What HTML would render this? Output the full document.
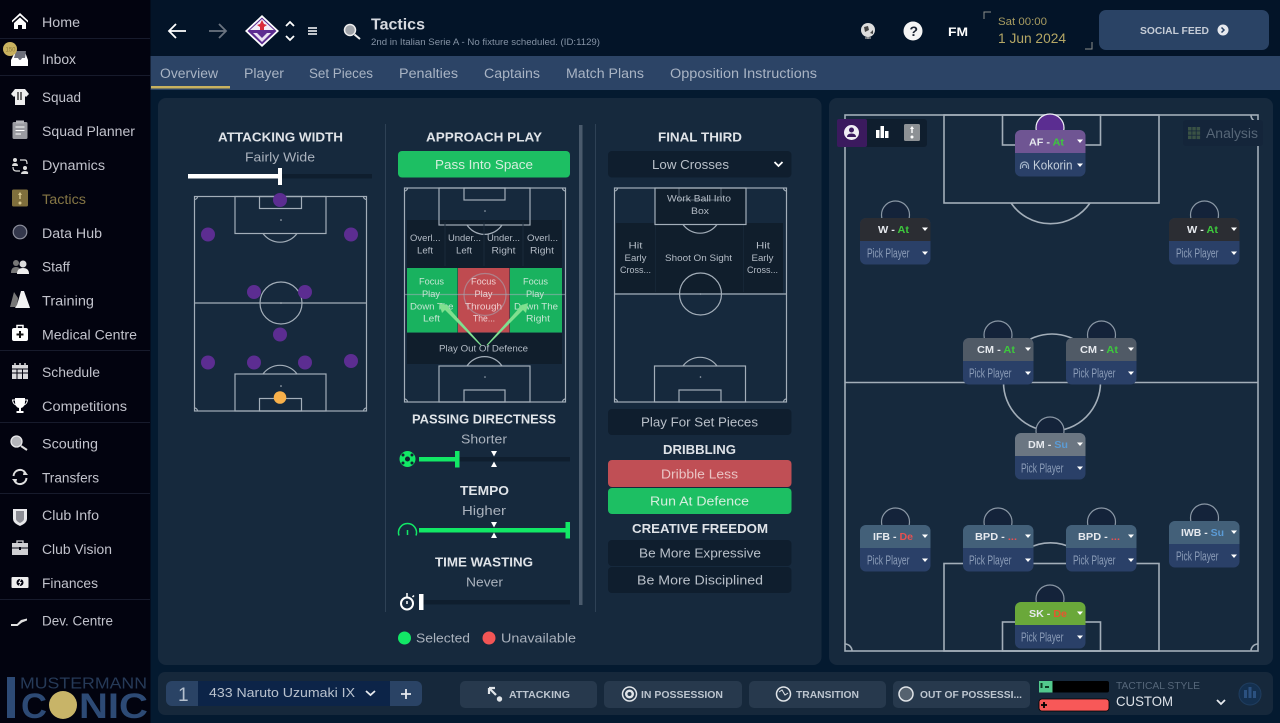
<!DOCTYPE html>
<html lang="en"><head><meta charset="utf-8"><title>Tactics</title>
<style>
html,body{margin:0;padding:0;background:#041a30;width:1280px;height:723px;overflow:hidden}
svg{display:block;position:absolute;left:0;top:0;filter:blur(.35px)}
text{font-family:"Liberation Sans",sans-serif;white-space:pre}
.n{font-size:13.5px;fill:#c2c3cc}
.tab{font-size:13.5px;fill:#a9b4c4}
.h{font-size:13px;font-weight:bold;fill:#dfe3e8}
.s{font-size:13px;fill:#aab2bd}
.c{font-size:9.6px;fill:#b4bcc6}
.cw{font-size:9.6px;fill:#c5e6d3}
.b{font-size:13px;fill:#b9c0c9}
.r{font-size:10px;font-weight:bold;fill:#e6e9ee}
.pp{font-size:12.5px;fill:#8c9db8}
.bt{font-size:10.5px;font-weight:bold;fill:#bcc5cf}
.l{stroke:#a3aeb9;stroke-width:1.2;fill:none}
.R{stroke:#a3aeb9;stroke-width:1.6;fill:none}
.w{fill:#fff}
</style></head><body>
<svg width="1280" height="723" viewBox="0 0 1280 723" xmlns="http://www.w3.org/2000/svg">
<defs>
<g id="tr"><polygon points="62,9.500 68,9.500 65,13" fill="#fff"/><polygon points="62,33.500 68,33.500 65,37" fill="#fff"/></g>
</defs>

<!-- backgrounds -->
<rect width="1280" height="723" fill="#041a30"/>
<rect x="150" width="1130" height="56" fill="#031428"/>
<rect x="150" y="56" width="1130" height="34" fill="#2c4466"/>
<rect y="0" width="150.500" height="723" fill="#02030f"/>
<rect x="158" y="98" width="663.500" height="567" rx="8" fill="#16293d"/>
<rect x="829" y="98" width="444" height="567" rx="8" fill="#16293d"/>
<rect x="158" y="672" width="1115" height="43" rx="7" fill="#16283b"/>

<!-- sidebar separators -->
<g fill="#171b2c"><rect x="0" y="38" width="150" height="1"/><rect x="0" y="75" width="150" height="1"/><rect x="0" y="350" width="150" height="1"/><rect x="0" y="422" width="150" height="1"/><rect x="0" y="493" width="150" height="1"/><rect x="0" y="599" width="150" height="1"/></g>

<!-- sidebar text -->
<text class="n" x="42" y="27" textLength="38" lengthAdjust="spacingAndGlyphs">Home</text>
<text class="n" x="42" y="64" textLength="34" lengthAdjust="spacingAndGlyphs">Inbox</text>
<text class="n" x="42" y="102" textLength="39" lengthAdjust="spacingAndGlyphs">Squad</text>
<text class="n" x="42" y="136" textLength="93" lengthAdjust="spacingAndGlyphs">Squad Planner</text>
<text class="n" x="42" y="170" textLength="63" lengthAdjust="spacingAndGlyphs">Dynamics</text>
<text class="n" x="42" y="204" textLength="44" lengthAdjust="spacingAndGlyphs" style="fill:#857645">Tactics</text>
<text class="n" x="42" y="238" textLength="60" lengthAdjust="spacingAndGlyphs">Data Hub</text>
<text class="n" x="42" y="271.500" textLength="28" lengthAdjust="spacingAndGlyphs">Staff</text>
<text class="n" x="42" y="305.500" textLength="52" lengthAdjust="spacingAndGlyphs">Training</text>
<text class="n" x="42" y="339.500" textLength="95" lengthAdjust="spacingAndGlyphs">Medical Centre</text>
<text class="n" x="42" y="377" textLength="58" lengthAdjust="spacingAndGlyphs">Schedule</text>
<text class="n" x="42" y="411" textLength="85" lengthAdjust="spacingAndGlyphs">Competitions</text>
<text class="n" x="42" y="448.500" textLength="56" lengthAdjust="spacingAndGlyphs">Scouting</text>
<text class="n" x="42" y="482.500" textLength="57" lengthAdjust="spacingAndGlyphs">Transfers</text>
<text class="n" x="42" y="520" textLength="57" lengthAdjust="spacingAndGlyphs">Club Info</text>
<text class="n" x="42" y="554" textLength="70" lengthAdjust="spacingAndGlyphs">Club Vision</text>
<text class="n" x="42" y="588" textLength="56" lengthAdjust="spacingAndGlyphs">Finances</text>
<text class="n" x="42" y="625.500" textLength="71" lengthAdjust="spacingAndGlyphs">Dev. Centre</text>

<!-- sidebar icons -->
<path class="w" d="M20 13L12 20.500V22.500L20 15.500L28 22.500V20.500ZM14 23L20 17.500L26 23V29H22V25H18V29H14Z"/>
<path fill="#fff" d="M15 52H25L28 60V66H11V60Z"/><path fill="#6c6f7a" d="M16 51H26L25 58H22Q20 62 18 58H14Z"/>
<circle cx="10" cy="49" r="7" fill="#c9b25f"/><text x="5.500" y="51.500" font-size="6.500" fill="#8d7a3b" textLength="10" lengthAdjust="spacingAndGlyphs">150</text>
<path fill="#eee" d="M15 89H25L29 94L26 97L25 96V105H15V96L14 97L11 94Z"/><path d="M18 92V100M21 92V100" stroke="#222" stroke-width="1.300"/>
<rect x="12.500" y="122" width="15" height="17" rx="1.500" fill="#9a9ba1"/><rect x="16" y="120.500" width="8" height="3" fill="#b5b6bb"/><path d="M15.500 127H24.500M15.500 130.500H24.500M15.500 134H21" stroke="#fff" stroke-width="1"/>
<g fill="#ddd"><circle cx="15" cy="160" r="2"/><path d="M12 166Q12 163 15 163T18 166Z"/><circle cx="25" cy="168" r="2"/><path d="M21 174Q21 171 25 171T28 174Z"/></g><path d="M20 160H25Q27 160 27 164M20 171H16Q13 171 13 167" stroke="#ddd" stroke-width="1.200" fill="none"/>
<rect x="12" y="189.500" width="16" height="17" rx="1.500" fill="#7f6f3c"/><path d="M20 192L18 195H22ZM19.300 195H20.700V199H19.300Z" fill="#d9c98f"/><circle cx="20" cy="203" r="1.500" fill="#d9c98f"/>
<circle cx="20" cy="232" r="6.800" fill="#33374b" stroke="#8d8f9c" stroke-width="1.200"/>
<circle cx="16" cy="263" r="3" fill="#777"/><path d="M11 273Q11 267 16 267T21 273Z" fill="#777"/><circle cx="23" cy="264" r="3.500" fill="#ddd"/><path d="M17 274Q17 268 23 268T29 274Z" fill="#eee"/>
<path d="M14 292L10 307H17L18 298Z" fill="#777"/><path d="M21 291H24L29 305L30 308H15L17 305Z" fill="#f2f2f2"/>
<rect x="12" y="328" width="16" height="13" rx="2" fill="#fff"/><path d="M17 328V325.500H23V328" stroke="#fff" stroke-width="1.500" fill="none"/><path d="M20 331V338M16.500 334.500H23.500" stroke="#111" stroke-width="2"/>
<rect x="12" y="365" width="16" height="14" fill="#d9d9dc"/><path d="M15 363V366M25 363V366M20 363V366" stroke="#d9d9dc" stroke-width="1.500"/><path d="M12 369H28M12 373H28M17 369V379M22.500 369V379" stroke="#02030f" stroke-width="1"/>
<path fill="#fff" d="M15 398H25V402Q25 407 21 408V411H23.500V413H16.500V411H19V408Q15 407 15 402Z"/><path d="M15 400H12.500Q13 404 16 405M25 400H27.500Q27 404 24 405" stroke="#fff" stroke-width="1" fill="none"/>
<circle cx="16.500" cy="441.500" r="5.500" fill="#b5b6bb" stroke="#e8e8ea" stroke-width="1.300"/><path d="M21 446L27 450" stroke="#ddd" stroke-width="2"/>
<path d="M13.500 476A6.500 6.500 0 0 1 25.500 473M26.500 478A6.500 6.500 0 0 1 14.500 481" stroke="#e0e0e0" stroke-width="2" fill="none"/><path d="M24 470L28 475H23ZM16 484L12 479H17Z" fill="#e0e0e0"/>
<path d="M13 509H27V519Q27 523 20 526Q13 523 13 519Z" fill="#e9e9ec"/><path d="M16 511H24V519Q24 521 20 523Q16 521 16 519Z" fill="#8d8e96"/>
<rect x="12" y="543" width="16" height="12" fill="#d0d0d4"/><path d="M17 543V541H23V543" stroke="#d0d0d4" stroke-width="1.300" fill="none"/><path d="M12 548H28" stroke="#02030f"/><rect x="19" y="547" width="2" height="3" fill="#02030f"/>
<rect x="11.500" y="577" width="17" height="11" rx="1" fill="#eee"/><circle cx="20" cy="582.500" r="3.500" fill="#02030f"/><path d="M21 579L19 582.500H21L19 586" stroke="#eee" stroke-width="1"/>
<path d="M11 624H17L21 620L27 618.500V620.500L22 622.500L17.500 626H11Z" fill="#e0e0e0"/>

<!-- logo -->
<text x="20" y="688.500" font-size="15.500" fill="#263a58" textLength="127" lengthAdjust="spacingAndGlyphs">MUSTERMANN</text>
<rect x="7" y="677" width="8" height="41" fill="#2d4a75"/>
<text x="21" y="718" font-size="35" font-weight="bold" fill="#2d4a75" textLength="26" lengthAdjust="spacingAndGlyphs">C</text>
<circle cx="63" cy="705" r="14" fill="#c8b468"/>
<text x="79" y="718" font-size="35" font-weight="bold" fill="#2d4a75" textLength="69" lengthAdjust="spacingAndGlyphs">NIC</text>

<!-- top nav -->
<path d="M186 31H169M176 24L169 31L176 38" stroke="#fff" stroke-width="1.800" fill="none"/>
<path d="M209 31H226M219 24L226 31L219 38" stroke="#6b7480" stroke-width="1.800" fill="none"/>
<polygon points="262,15 279,31 262,47 245,31" fill="#fff"/>
<polygon points="262,17.500 276.500,31 262,44.500 247.500,31" fill="#5d2c91"/>
<polygon points="262,19 274,30 250,30" fill="#f4eef8"/>
<path d="M262 20L264 24L267 25L264 27V30H260V27L257 25L260 24Z" fill="#d92b3a"/>
<path d="M253 33H271L262 42Z" fill="#e9e0f2"/><path d="M257 33H267L262 38Z" fill="#5d2c91"/>
<path d="M286 26L290 22L294 26M286 36L290 40L294 36" stroke="#fff" stroke-width="1.800" fill="none"/>
<path d="M308 28H317M308 31H317M308 34H317" stroke="#fff" stroke-width="1.600"/>
<circle cx="350" cy="30" r="5.500" fill="#a0a4aa" stroke="#eee" stroke-width="1.500"/><path d="M354.500 34.500L360 39" stroke="#eee" stroke-width="2"/>
<text x="371" y="29.500" font-size="15.500" font-weight="bold" fill="#d6d9df" textLength="54" lengthAdjust="spacingAndGlyphs">Tactics</text>
<text x="371" y="45" font-size="9.500" fill="#8593a5" textLength="229" lengthAdjust="spacingAndGlyphs">2nd in Italian Serie A - No fixture scheduled. (ID:1129)</text>

<circle cx="868" cy="30" r="7" fill="#ddd"/><path d="M864 27L868 26L869 30L865 32ZM870 33L873 30V34Z" fill="#444"/><path d="M865 38H871M868 37V39" stroke="#aaa" stroke-width="1.200"/>
<circle cx="913" cy="31" r="9.500" fill="#f4f4f4"/><text x="909.500" y="36" font-size="14" font-weight="bold" fill="#1a2230">?</text>
<text x="948" y="36" font-size="12" font-weight="bold" fill="#fff" textLength="20" lengthAdjust="spacingAndGlyphs">FM</text>
<path d="M984 19V12H991" stroke="#8d8f8c" stroke-width="1" fill="none"/><path d="M1092 42V49H1085" stroke="#8d8f8c" stroke-width="1" fill="none"/>
<text x="998" y="25" font-size="11" fill="#a89c61" textLength="49" lengthAdjust="spacingAndGlyphs">Sat 00:00</text>
<text x="998" y="43" font-size="13.500" fill="#b5a765" textLength="68" lengthAdjust="spacingAndGlyphs">1 Jun 2024</text>
<rect x="1099" y="10" width="170" height="40" rx="7" fill="#2a4365"/>
<text x="1140" y="34" font-size="10.500" font-weight="bold" fill="#c5ccd6" textLength="69" lengthAdjust="spacingAndGlyphs">SOCIAL FEED</text>
<circle cx="1223" cy="30" r="5.500" fill="#e6e9ee"/><path d="M1221.500 27.500L1224 30L1221.500 32.500" stroke="#2a4365" stroke-width="1.500" fill="none"/>

<!-- tabs -->
<text class="tab" x="160" y="78" textLength="58" lengthAdjust="spacingAndGlyphs">Overview</text>
<text class="tab" x="244" y="78" textLength="40" lengthAdjust="spacingAndGlyphs">Player</text>
<text class="tab" x="309" y="78" textLength="64" lengthAdjust="spacingAndGlyphs">Set Pieces</text>
<text class="tab" x="399" y="78" textLength="59" lengthAdjust="spacingAndGlyphs">Penalties</text>
<text class="tab" x="484" y="78" textLength="56" lengthAdjust="spacingAndGlyphs">Captains</text>
<text class="tab" x="566" y="78" textLength="78" lengthAdjust="spacingAndGlyphs">Match Plans</text>
<text class="tab" x="670" y="78" textLength="147" lengthAdjust="spacingAndGlyphs">Opposition Instructions</text>
<rect x="151" y="86" width="79" height="2.500" fill="#c9b25f"/>

<!-- dividers -->
<rect x="385" y="124" width="1" height="488" fill="#2e4155"/>
<rect x="595" y="124" width="1" height="488" fill="#2e4155"/>
<rect x="579" y="125" width="3.500" height="480" fill="#4a5a6c"/>

<!-- attacking width -->
<text class="h" x="218" y="141.500" textLength="125" lengthAdjust="spacingAndGlyphs">ATTACKING WIDTH</text>
<text class="s" x="245" y="161.500" textLength="70" lengthAdjust="spacingAndGlyphs">Fairly Wide</text>
<rect x="188" y="174" width="184" height="4.500" fill="#0f1e2e"/>
<rect x="188" y="174" width="92" height="4.500" fill="#fff"/>
<rect x="278" y="168" width="4" height="17" fill="#fff"/>

<!-- pitch 1 -->
<g class="l">
<rect x="194.500" y="196.500" width="172" height="214.500"/>
<rect x="235" y="196.500" width="91" height="37"/>
<rect x="259.500" y="196.500" width="42" height="12"/>
<path d="M263 233.500A21 21 0 0 0 297 233.500"/>
<path d="M194.500 303H366.500"/>
<circle cx="281" cy="303" r="21"/>
<rect x="235" y="374" width="91" height="37"/>
<rect x="259.500" y="398.500" width="42" height="12.500"/>
<path d="M263 374A21 21 0 0 1 297 374"/>
<path d="M194.500 199.500A3 3 0 0 0 197.500 196.500M366.500 199.500A3 3 0 0 1 363.500 196.500M194.500 408A3 3 0 0 1 197.500 411M366.500 408A3 3 0 0 0 363.500 411"/>
</g>
<g fill="#b8c0c8"><circle cx="281" cy="220" r=".8"/><circle cx="281" cy="303" r=".8"/><circle cx="281" cy="386" r=".8"/></g>
<g fill="#5c2d91"><circle cx="280" cy="200" r="7"/><circle cx="208" cy="234.500" r="7"/><circle cx="351" cy="234.500" r="7"/><circle cx="254" cy="292" r="7"/><circle cx="305" cy="292" r="7"/><circle cx="280" cy="334.500" r="7"/><circle cx="208" cy="362.500" r="7"/><circle cx="254" cy="362.500" r="7"/><circle cx="305" cy="362.500" r="7"/><circle cx="351" cy="361" r="7"/></g>
<circle cx="280" cy="397.500" r="6.300" fill="#f8b04a"/>

<!-- approach play -->
<text class="h" x="426" y="141.500" textLength="116" lengthAdjust="spacingAndGlyphs">APPROACH PLAY</text>
<rect x="398" y="151" width="172" height="26.500" rx="4" fill="#1dbf63"/>
<text class="b" x="435" y="169" textLength="98" lengthAdjust="spacingAndGlyphs" style="fill:#d5eede">Pass Into Space</text>

<!-- pitch 2 fields -->
<rect x="407" y="220" width="155" height="48" fill="#101e2c"/>
<rect x="407" y="268" width="50.500" height="64.500" fill="#19b25f"/>
<rect x="458" y="268" width="51.500" height="64.500" fill="#bf4b50"/>
<rect x="510" y="268" width="52" height="64.500" fill="#19b25f"/>
<rect x="407" y="333" width="155" height="31" fill="#101e2c"/>
<g class="l">
<rect x="404.500" y="188" width="161" height="214"/>
<rect x="439" y="188" width="91" height="37"/>
<rect x="464" y="188" width="41" height="12"/>
<path d="M467 225A21 21 0 0 0 502 225"/>
<path d="M404.500 294.500H565.500" stroke-opacity=".55"/>
<circle cx="485" cy="294.500" r="21" stroke-opacity=".55"/>
<rect x="439" y="366" width="91" height="36"/>
<rect x="464" y="390" width="41" height="12"/>
<path d="M467 366A21 21 0 0 1 502 366"/>
<path d="M404.500 191A3 3 0 0 0 407.500 188M565.500 191A3 3 0 0 1 562.500 188M404.500 399A3 3 0 0 1 407.500 402M565.500 399A3 3 0 0 0 562.500 402"/>
</g>
<path d="M445 222V266M484 222V266M523 222V266" stroke="#1a2a3a" stroke-width="1"/>
<g fill="#a3aeb9"><circle cx="485" cy="211" r=".8"/><circle cx="485" cy="377" r=".8"/></g>
<text class="c" x="410" y="241" textLength="30.500" lengthAdjust="spacingAndGlyphs">Overl...</text>
<text class="c" x="417" y="253.500" textLength="16" lengthAdjust="spacingAndGlyphs">Left</text>
<text class="c" x="448" y="241" textLength="33" lengthAdjust="spacingAndGlyphs">Under...</text>
<text class="c" x="456" y="253.500" textLength="16" lengthAdjust="spacingAndGlyphs">Left</text>
<text class="c" x="487" y="241" textLength="33" lengthAdjust="spacingAndGlyphs">Under...</text>
<text class="c" x="491.500" y="253.500" textLength="24" lengthAdjust="spacingAndGlyphs">Right</text>
<text class="c" x="527" y="241" textLength="31" lengthAdjust="spacingAndGlyphs">Overl...</text>
<text class="c" x="530" y="253.500" textLength="24" lengthAdjust="spacingAndGlyphs">Right</text>

<text class="cw" x="419" y="284.500" textLength="25" lengthAdjust="spacingAndGlyphs">Focus</text>
<text class="cw" x="422" y="297" textLength="18" lengthAdjust="spacingAndGlyphs">Play</text>
<text class="cw" x="410" y="309.500" textLength="43.500" lengthAdjust="spacingAndGlyphs">Down The</text>
<text class="cw" x="423" y="321.500" textLength="17" lengthAdjust="spacingAndGlyphs">Left</text>
<text class="cw" x="471" y="284.500" textLength="25" lengthAdjust="spacingAndGlyphs" style="fill:#f0cfd0">Focus</text>
<text class="cw" x="474.500" y="297" textLength="18" lengthAdjust="spacingAndGlyphs" style="fill:#f0cfd0">Play</text>
<text class="cw" x="465" y="309.500" textLength="37" lengthAdjust="spacingAndGlyphs" style="fill:#f0cfd0">Through</text>
<text class="cw" x="473" y="321.500" textLength="22" lengthAdjust="spacingAndGlyphs" style="fill:#f0cfd0">The...</text>
<text class="cw" x="523" y="284.500" textLength="25" lengthAdjust="spacingAndGlyphs">Focus</text>
<text class="cw" x="526" y="297" textLength="18" lengthAdjust="spacingAndGlyphs">Play</text>
<text class="cw" x="514" y="309.500" textLength="44" lengthAdjust="spacingAndGlyphs">Down The</text>
<text class="cw" x="526" y="321.500" textLength="24" lengthAdjust="spacingAndGlyphs">Right</text>
<text class="c" x="439" y="351.500" textLength="89" lengthAdjust="spacingAndGlyphs">Play Out Of Defence</text>
<polygon points="481.500,345 480.500,345.500 444,309 447,306" fill="#7fe08f"/><polygon points="439,303 449,306 442,313" fill="#7fe08f"/>
<polygon points="486.500,345 487.500,345.500 524,309 521,306" fill="#7fe08f"/><polygon points="528,303 526,313 519,306" fill="#7fe08f"/>

<!-- sliders -->
<text class="h" x="412" y="423.500" textLength="144" lengthAdjust="spacingAndGlyphs">PASSING DIRECTNESS</text>
<text class="s" x="461" y="443.500" textLength="46" lengthAdjust="spacingAndGlyphs">Shorter</text>
<rect x="419" y="457" width="151" height="4.500" fill="#0f1e2e"/>
<rect x="419" y="457" width="38" height="4.500" fill="#12e866"/>
<rect x="455" y="451" width="4.500" height="16.500" fill="#12e866"/>
<circle cx="407.500" cy="459" r="8" fill="#12e866"/><g fill="#102030"><circle cx="407.500" cy="459" r="2.500"/><circle cx="403" cy="455" r="1.500"/><circle cx="412" cy="455" r="1.500"/><circle cx="403" cy="463" r="1.500"/><circle cx="412" cy="463" r="1.500"/></g>
<polygon points="491,451 497,451 494,456.500" fill="#fff"/><polygon points="491,467 497,467 494,461.500" fill="#fff"/>

<text class="h" x="460" y="495" textLength="49" lengthAdjust="spacingAndGlyphs">TEMPO</text>
<text class="s" x="462" y="515" textLength="44" lengthAdjust="spacingAndGlyphs">Higher</text>
<rect x="419" y="528" width="151" height="4.500" fill="#12e866"/>
<rect x="565.500" y="522" width="4.500" height="16.500" fill="#12e866"/>
<path d="M399 535.500A9 9 0 1 1 416 535.500" stroke="#12e866" stroke-width="1.500" fill="none"/><path d="M407.500 530V535" stroke="#12e866" stroke-width="1.500"/>
<polygon points="491,522 497,522 494,527.500" fill="#fff"/><polygon points="491,538 497,538 494,532.500" fill="#fff"/>

<text class="h" x="435" y="566.500" textLength="98" lengthAdjust="spacingAndGlyphs">TIME WASTING</text>
<text class="s" x="466" y="586.500" textLength="37" lengthAdjust="spacingAndGlyphs">Never</text>
<rect x="419" y="600" width="151" height="4.500" fill="#0f1e2e"/>
<rect x="419" y="594" width="4.500" height="16" fill="#fff"/>
<circle cx="407" cy="603.500" r="6" stroke="#fff" stroke-width="2" fill="none"/><path d="M407 593V597M407 601V604M412.500 597L414 595.500" stroke="#fff" stroke-width="1.500"/>

<circle cx="404.500" cy="638" r="6.500" fill="#12e866"/>
<text class="s" x="416" y="642.500" textLength="54" lengthAdjust="spacingAndGlyphs">Selected</text>
<circle cx="489" cy="638" r="6.500" fill="#f25555"/>
<text class="s" x="501" y="642.500" textLength="75" lengthAdjust="spacingAndGlyphs">Unavailable</text>

<!-- final third -->
<text class="h" x="658" y="141.500" textLength="84" lengthAdjust="spacingAndGlyphs">FINAL THIRD</text>
<rect x="608" y="151" width="183.500" height="26.500" rx="4" fill="#0f1e2e"/>
<text class="b" x="652" y="169" textLength="77" lengthAdjust="spacingAndGlyphs">Low Crosses</text>
<path d="M774.500 162L778.500 166L782.500 162" stroke="#fff" stroke-width="1.800" fill="none"/>
<rect x="655.500" y="188" width="90" height="36" fill="#101e2c"/>
<rect x="616" y="223" width="167" height="70" fill="#101e2c"/>
<path d="M655.500 224V292M743.500 224V292" stroke="#162636"/>
<g class="l">
<rect x="614.500" y="188" width="172" height="214"/>
<rect x="655" y="188" width="91" height="36.500"/>
<rect x="679" y="188" width="42" height="12" stroke-opacity=".4"/>
<path d="M683 224.500A21 21 0 0 0 717 224.500"/>
<path d="M614.500 294H786.500"/>
<circle cx="700.500" cy="294" r="21"/>
<rect x="654.500" y="366" width="91" height="36"/>
<rect x="679" y="390" width="42" height="12"/>
<path d="M683 366A21 21 0 0 1 717 366"/>
<path d="M614.500 191A3 3 0 0 0 617.500 188M786.500 191A3 3 0 0 1 783.500 188M614.500 399A3 3 0 0 1 617.500 402M786.500 399A3 3 0 0 0 783.500 402"/>
</g>
<g fill="#a3aeb9"><circle cx="700.500" cy="377" r=".8"/><circle cx="700.500" cy="294" r=".8"/></g>
<text class="c" x="667" y="201.500" textLength="64" lengthAdjust="spacingAndGlyphs">Work Ball Into</text>
<text class="c" x="691" y="214" textLength="18" lengthAdjust="spacingAndGlyphs">Box</text>
<text class="c" x="628.500" y="248.500" textLength="14" lengthAdjust="spacingAndGlyphs">Hit</text>
<text class="c" x="624.500" y="261" textLength="22" lengthAdjust="spacingAndGlyphs">Early</text>
<text class="c" x="620" y="273" textLength="31" lengthAdjust="spacingAndGlyphs">Cross...</text>
<text class="c" x="665" y="261" textLength="67" lengthAdjust="spacingAndGlyphs">Shoot On Sight</text>
<text class="c" x="756" y="248.500" textLength="14" lengthAdjust="spacingAndGlyphs">Hit</text>
<text class="c" x="751.500" y="261" textLength="22" lengthAdjust="spacingAndGlyphs">Early</text>
<text class="c" x="747" y="273" textLength="31" lengthAdjust="spacingAndGlyphs">Cross...</text>

<rect x="608" y="409" width="183.500" height="26" rx="4" fill="#0f1e2e"/>
<text class="b" x="641" y="426.500" textLength="117" lengthAdjust="spacingAndGlyphs">Play For Set Pieces</text>
<text class="h" x="663" y="454" textLength="73" lengthAdjust="spacingAndGlyphs">DRIBBLING</text>
<rect x="608" y="460" width="183.500" height="27" rx="4" fill="#c04f55"/>
<text class="b" x="661" y="478.500" textLength="77" lengthAdjust="spacingAndGlyphs" style="fill:#eac5c5">Dribble Less</text>
<rect x="608" y="488" width="183.500" height="26" rx="4" fill="#1dbf63"/>
<text class="b" x="650" y="505.500" textLength="99" lengthAdjust="spacingAndGlyphs" style="fill:#d5eede">Run At Defence</text>
<text class="h" x="632" y="533" textLength="136" lengthAdjust="spacingAndGlyphs">CREATIVE FREEDOM</text>
<rect x="608" y="540" width="183.500" height="26" rx="4" fill="#0f1e2e"/>
<text class="b" x="639" y="557.500" textLength="122" lengthAdjust="spacingAndGlyphs">Be More Expressive</text>
<rect x="608" y="567" width="183.500" height="26" rx="4" fill="#0f1e2e"/>
<text class="b" x="637" y="584.500" textLength="126" lengthAdjust="spacingAndGlyphs">Be More Disciplined</text>

<!-- right pitch -->
<g class="R">
<rect x="845" y="115" width="413" height="536"/>
<rect x="944" y="115" width="215" height="88"/>
<rect x="1002.500" y="115" width="98" height="30"/>
<path d="M1011 203A48 48 0 0 0 1090 203"/>
<path d="M845 382.500H1258"/>
<circle cx="1052" cy="382.500" r="48.500"/>
<rect x="944" y="563.500" width="215" height="87.500"/>
<rect x="1002.500" y="622" width="98" height="29"/>
<path d="M1011 563.500A48 48 0 0 1 1090 563.500"/>
<path d="M845 644A7 7 0 0 1 852 651M1258 644A7 7 0 0 0 1251 651M1251 115A7 7 0 0 0 1258 122"/>
</g>

<!-- right tools -->
<rect x="837" y="119" width="90" height="28" rx="3" fill="#0f1e2e"/>
<rect x="837" y="119" width="30" height="28" rx="2" fill="#3b1a5e"/>
<circle cx="851.500" cy="132.500" r="7.500" fill="#f0eef4"/><circle cx="851.500" cy="130" r="2.500" fill="#3b1a5e"/><path d="M847 137Q847 133.500 851.500 133.500T856 137Z" fill="#3b1a5e"/>
<path d="M876 130h3.500v8H876ZM880.500 126h3.500v12h-3.500ZM885 131h3.500v7H885Z" fill="#fff"/>
<rect x="904" y="124" width="16" height="17" rx="1.500" fill="#8d9195"/><path d="M912 126L910 129H914ZM911.300 129H912.700V133H911.300Z" fill="#fff"/><circle cx="912" cy="137" r="1.500" fill="#fff"/>
<rect x="1183" y="120" width="80" height="26" rx="3" fill="#14253a"/>
<g fill="#3a5245"><rect x="1188" y="127" width="3.500" height="3.500"/><rect x="1192.300" y="127" width="3.500" height="3.500"/><rect x="1196.600" y="127" width="3.500" height="3.500"/><rect x="1188" y="131.300" width="3.500" height="3.500"/><rect x="1192.300" y="131.300" width="3.500" height="3.500"/><rect x="1196.600" y="131.300" width="3.500" height="3.500"/><rect x="1188" y="135.600" width="3.500" height="3.500"/><rect x="1192.300" y="135.600" width="3.500" height="3.500"/><rect x="1196.600" y="135.600" width="3.500" height="3.500"/></g>
<text x="1206" y="138" font-size="13.500" fill="#566677" textLength="52" lengthAdjust="spacingAndGlyphs">Analysis</text>

<!-- rings -->
<g fill="#14233a" stroke="#8a97a5" stroke-width="1.200">
<circle cx="895.500" cy="215" r="14"/><circle cx="1204.500" cy="215" r="14"/>
<circle cx="998" cy="335" r="14"/><circle cx="1101.500" cy="335" r="14"/>
<circle cx="1050" cy="431" r="14"/><circle cx="895.500" cy="522" r="14"/>
<circle cx="998" cy="522" r="14"/><circle cx="1101.500" cy="522" r="14"/>
<circle cx="1204.500" cy="518" r="14"/><circle cx="1050" cy="599" r="14"/>
</g>
<circle cx="1050" cy="128" r="14" fill="#5b2d91" stroke="#f0f0f5" stroke-width="1.200"/>

<!-- cards -->
<g transform="translate(1015,130)"><rect width="70.500" height="46.500" rx="6" fill="#2a4068"/><path d="M0 23V6a6 6 0 0 1 6-6H64.500a6 6 0 0 1 6 6V23z" fill="#6f5593"/><use href="#tr"/>
<text class="r" x="14" y="15.500" textLength="35" lengthAdjust="spacingAndGlyphs">AF - <tspan fill="#3dc93d">At</tspan></text>
<path d="M5.500 39V36A4 4 0 0 1 13.500 36V39M7.500 38V36.500A2 2 0 0 1 11.500 36.500V38" stroke="#9fb0c6" stroke-width="1.200" fill="none"/>
<text x="18" y="39.500" font-size="12.500" fill="#c5cfdb" textLength="39.500" lengthAdjust="spacingAndGlyphs">Kokorin</text></g>

<g transform="translate(860,218)"><rect width="70.500" height="46.500" rx="6" fill="#2a4068"/><path d="M0 23V6a6 6 0 0 1 6-6H64.500a6 6 0 0 1 6 6V23z" fill="#2b2d33"/><use href="#tr"/>
<text class="r" x="18" y="15" textLength="31" lengthAdjust="spacingAndGlyphs">W - <tspan fill="#3dc93d">At</tspan></text>
<text class="pp" x="7" y="39.500" textLength="42.500" lengthAdjust="spacingAndGlyphs">Pick Player</text></g>

<g transform="translate(1169,218)"><rect width="70.500" height="46.500" rx="6" fill="#2a4068"/><path d="M0 23V6a6 6 0 0 1 6-6H64.500a6 6 0 0 1 6 6V23z" fill="#2b2d33"/><use href="#tr"/>
<text class="r" x="18" y="15" textLength="31" lengthAdjust="spacingAndGlyphs">W - <tspan fill="#3dc93d">At</tspan></text>
<text class="pp" x="7" y="39.500" textLength="42.500" lengthAdjust="spacingAndGlyphs">Pick Player</text></g>

<g transform="translate(963,338)"><rect width="70.500" height="46.500" rx="6" fill="#2a4068"/><path d="M0 23V6a6 6 0 0 1 6-6H64.500a6 6 0 0 1 6 6V23z" fill="#505a66"/><use href="#tr"/>
<text class="r" x="14" y="15" textLength="38" lengthAdjust="spacingAndGlyphs">CM - <tspan fill="#3dc93d">At</tspan></text>
<text class="pp" x="6" y="39.500" textLength="42.500" lengthAdjust="spacingAndGlyphs">Pick Player</text></g>

<g transform="translate(1066,338)"><rect width="70.500" height="46.500" rx="6" fill="#2a4068"/><path d="M0 23V6a6 6 0 0 1 6-6H64.500a6 6 0 0 1 6 6V23z" fill="#505a66"/><use href="#tr"/>
<text class="r" x="14" y="15" textLength="38" lengthAdjust="spacingAndGlyphs">CM - <tspan fill="#3dc93d">At</tspan></text>
<text class="pp" x="7" y="39.500" textLength="42.500" lengthAdjust="spacingAndGlyphs">Pick Player</text></g>

<g transform="translate(1015,433)"><rect width="70.500" height="46.500" rx="6" fill="#2a4068"/><path d="M0 23V6a6 6 0 0 1 6-6H64.500a6 6 0 0 1 6 6V23z" fill="#6b7682"/><use href="#tr"/>
<text class="r" x="13" y="15" textLength="40" lengthAdjust="spacingAndGlyphs">DM - <tspan fill="#5b9bd5">Su</tspan></text>
<text class="pp" x="6" y="39.500" textLength="42.500" lengthAdjust="spacingAndGlyphs">Pick Player</text></g>

<g transform="translate(860,525)"><rect width="70.500" height="46.500" rx="6" fill="#2a4068"/><path d="M0 23V6a6 6 0 0 1 6-6H64.500a6 6 0 0 1 6 6V23z" fill="#436079"/><use href="#tr"/>
<text class="r" x="13" y="15" textLength="40" lengthAdjust="spacingAndGlyphs">IFB - <tspan fill="#e85050">De</tspan></text>
<text class="pp" x="7" y="39.500" textLength="42.500" lengthAdjust="spacingAndGlyphs">Pick Player</text></g>

<g transform="translate(963,525)"><rect width="70.500" height="46.500" rx="6" fill="#2a4068"/><path d="M0 23V6a6 6 0 0 1 6-6H64.500a6 6 0 0 1 6 6V23z" fill="#436079"/><use href="#tr"/>
<text class="r" x="12" y="15" textLength="42" lengthAdjust="spacingAndGlyphs">BPD - <tspan fill="#e85050">...</tspan></text>
<text class="pp" x="6" y="39.500" textLength="42.500" lengthAdjust="spacingAndGlyphs">Pick Player</text></g>

<g transform="translate(1066,525)"><rect width="70.500" height="46.500" rx="6" fill="#2a4068"/><path d="M0 23V6a6 6 0 0 1 6-6H64.500a6 6 0 0 1 6 6V23z" fill="#436079"/><use href="#tr"/>
<text class="r" x="12" y="15" textLength="42" lengthAdjust="spacingAndGlyphs">BPD - <tspan fill="#e85050">...</tspan></text>
<text class="pp" x="7" y="39.500" textLength="42.500" lengthAdjust="spacingAndGlyphs">Pick Player</text></g>

<g transform="translate(1169,521)"><rect width="70.500" height="46.500" rx="6" fill="#2a4068"/><path d="M0 23V6a6 6 0 0 1 6-6H64.500a6 6 0 0 1 6 6V23z" fill="#436079"/><use href="#tr"/>
<text class="r" x="12" y="15" textLength="43" lengthAdjust="spacingAndGlyphs">IWB - <tspan fill="#5b9bd5">Su</tspan></text>
<text class="pp" x="7" y="39.500" textLength="42.500" lengthAdjust="spacingAndGlyphs">Pick Player</text></g>

<g transform="translate(1015,602)"><rect width="70.500" height="46.500" rx="6" fill="#2a4068"/><path d="M0 23V6a6 6 0 0 1 6-6H64.500a6 6 0 0 1 6 6V23z" fill="#6aa83a"/><use href="#tr"/>
<text class="r" x="14" y="15" textLength="38" lengthAdjust="spacingAndGlyphs">SK - <tspan fill="#e8552f">De</tspan></text>
<text class="pp" x="6" y="39.500" textLength="42.500" lengthAdjust="spacingAndGlyphs">Pick Player</text></g>

<!-- bottom bar -->
<rect x="166" y="681" width="256" height="25" rx="6" fill="#2a4365"/>
<rect x="198" y="681" width="192" height="25" fill="#0c2448"/>
<text x="178" y="701" font-size="19" fill="#b5c0ce">1</text>
<text x="209" y="697" font-size="13" fill="#b9c2ce" textLength="146" lengthAdjust="spacingAndGlyphs">433 Naruto Uzumaki IX</text>
<path d="M366 691L370.500 695L375 691" stroke="#e6e9ee" stroke-width="1.800" fill="none"/>
<path d="M406 689V699M401 694H411" stroke="#e6e9ee" stroke-width="1.800"/>
<rect x="460" y="681" width="137" height="27" rx="5" fill="#27394d"/>
<rect x="604" y="681" width="138" height="27" rx="5" fill="#27394d"/>
<rect x="749" y="681" width="137" height="27" rx="5" fill="#27394d"/>
<rect x="893" y="681" width="137" height="27" rx="5" fill="#27394d"/>
<path d="M489 688H495M489 688V694M489 688L496 695" stroke="#e0e4e8" stroke-width="2.200" fill="none"/><circle cx="499.500" cy="699" r="2.700" fill="#e0e4e8"/>
<circle cx="629.500" cy="694" r="7" fill="none" stroke="#e0e4e8" stroke-width="1.500"/><circle cx="629.500" cy="694" r="4.500" fill="#e0e4e8"/><circle cx="629.500" cy="694" r="2" fill="#27394d"/>
<text class="bt" x="509" y="698" textLength="61" lengthAdjust="spacingAndGlyphs">ATTACKING</text>
<text class="bt" x="641" y="698" textLength="82" lengthAdjust="spacingAndGlyphs">IN POSSESSION</text>
<circle cx="783.500" cy="694" r="7" fill="none" stroke="#e0e4e8" stroke-width="1.500"/><path d="M779 692L782 690L785 695L788 693" stroke="#e0e4e8" fill="none"/>
<text class="bt" x="796" y="698" textLength="63" lengthAdjust="spacingAndGlyphs">TRANSITION</text>
<circle cx="906" cy="694" r="7" fill="#55626f" stroke="#e0e4e8" stroke-width="1.500"/>
<text class="bt" x="920" y="698" textLength="102" lengthAdjust="spacingAndGlyphs">OUT OF POSSESSI...</text>

<rect x="1039" y="681" width="70" height="11.500" rx="2" fill="#000"/>
<rect x="1039" y="681" width="13.500" height="11.500" fill="#52c98d"/><path d="M1041.500 683V688M1045 687H1049" stroke="#0a3a22" stroke-width="2"/>
<rect x="1039" y="699" width="70" height="12" rx="3" fill="#f85858" stroke="#000" stroke-width=".8"/>
<path d="M1044 702V708M1041 705H1047" stroke="#000" stroke-width="1.800"/>
<text x="1116" y="689" font-size="10.500" fill="#56677a" textLength="84" lengthAdjust="spacingAndGlyphs">TACTICAL STYLE</text>
<text x="1116" y="706" font-size="14" fill="#dde2e8" textLength="57" lengthAdjust="spacingAndGlyphs">CUSTOM</text>
<path d="M1217 700L1221 704L1225 700" stroke="#e6e9ee" stroke-width="1.800" fill="none"/>
<circle cx="1250" cy="694" r="11" fill="#14304f" stroke="#1f3d5f"/><path d="M1244 690h3v8h-3ZM1248.500 687h3v11h-3ZM1253 691h3v7h-3Z" fill="#2b5180"/>
</svg>
</body></html>
